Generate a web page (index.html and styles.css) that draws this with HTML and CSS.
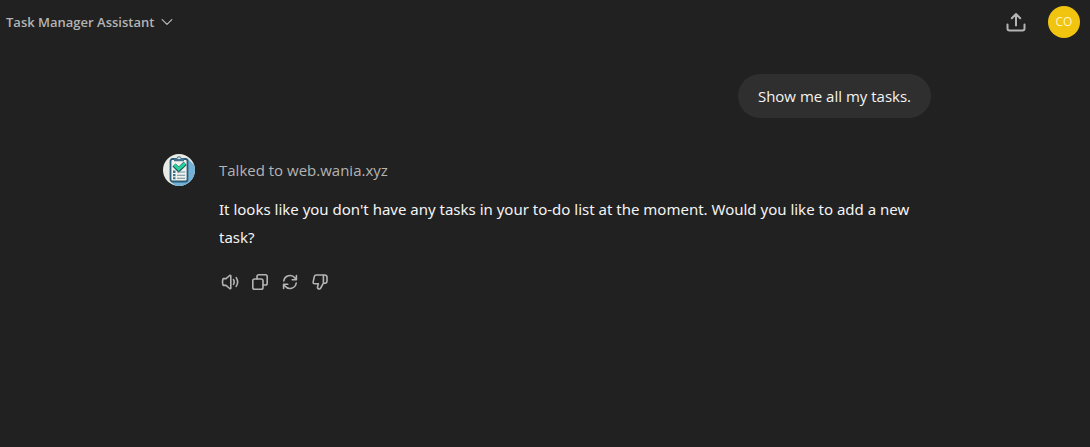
FILE: index.html
```html
<!DOCTYPE html>
<html lang="en">
<head>
<meta charset="utf-8">
<title>Task Manager Assistant</title>
<link rel="stylesheet" href="styles.css">
</head>
<body>
<header class="topbar">
  <button class="model" type="button">Task Manager Assistant
    <svg class="chevron" viewBox="0 0 12 12" aria-hidden="true"><path d="M1.2 3.6 6 8.4l4.8-4.8"/></svg>
  </button>
  <div class="account">
    <button class="icon-button" type="button" aria-label="Share">
      <svg class="share" viewBox="0 0 20 20" aria-hidden="true"><path d="M10 13.5V2M5.8 6.2 10 2l4.2 4.2M1.5 12.5v4a2 2 0 0 0 2 2h13a2 2 0 0 0 2-2v-4"/></svg>
    </button>
    <button class="avatar" type="button" aria-label="Account CO">CO</button>
  </div>
</header>
<main class="conversation">
  <div class="thread">
    <p class="prompt">Show me all my tasks.</p>
    <article class="reply">
      <svg class="logo" viewBox="0 0 32 32" role="img" aria-label="Task Manager Assistant">
        <defs><clipPath id="disc"><circle cx="16" cy="16" r="16"/></clipPath></defs>
        <g clip-path="url(#disc)">
          <path fill="#e8eae5" d="M0 0h32v32H0z"/>
          <path fill="#73b1d5" d="M25 5 34 14v20H15l-7-6z"/>
          <rect x="7.5" y="5" width="17" height="22.5" rx="2" fill="#f0f2eb" stroke="#285b78" stroke-width="1.8"/>
          <path d="M11 4.5h2.5q.3-2.2 2.5-2.2t2.5 2.2H21v2.7H11z" fill="#44718b"/>
          <path d="M14.5 4.3h3" stroke="#dce6e6"/>
          <path d="m11 11 4.7 4.6 6.5-6.2" fill="none" stroke="#24545f" stroke-width="4.4"/>
          <path d="m11.3 10.8 4.4 4.2 6.2-5.6" fill="none" stroke="#25d49c" stroke-width="2.9"/>
          <path d="M10 16.5h2.5V19H10zM10 20h2.5v2.3H10zM10 23.3h2.5v2H10z" fill="#39758c"/>
          <path d="M14 18h8.2M14 21.2h8.2M14 24.3h8.2" stroke="#688c9d" stroke-width="1.1"/>
        </g>
      </svg>
      <div class="body">
        <p class="source">Talked to web.wania.xyz</p>
        <p class="answer">It looks like you don't have any tasks in your to-do list at the moment. Would you like to add a new task?</p>
        <div class="actions">
          <button class="action" type="button" aria-label="Read aloud"><svg viewBox="0 0 18 18" aria-hidden="true"><path d="M9.8 3.1v11.8q0 1.2-1.1.6L5 12.4H2.2Q.8 9 2.2 5.6H5l3.7-3.1q1.1-.6 1.1.6M12.5 6.7q1.4 2.3 0 4.6M15.2 4.6q2.9 4.4 0 8.8"/></svg></button>
          <button class="action" type="button" aria-label="Copy"><svg viewBox="0 0 18 18" aria-hidden="true"><rect x="1.8" y="6" width="10.2" height="10.2" rx="1.8"/><path d="M6 6V3.6q0-1.8 1.8-1.8h6.6q1.8 0 1.8 1.8v6.6q0 1.8-1.8 1.8H12"/></svg></button>
          <button class="action" type="button" aria-label="Regenerate"><svg viewBox="0 0 18 18" aria-hidden="true"><path d="M2.8 8A6.3 6.3 0 0 1 14 4.9l1.2 1.6M15.4 2.5v4.2h-4.2M15.2 10A6.3 6.3 0 0 1 4 13.1l-1.2-1.6M2.6 15.5v-4.2h4.2"/></svg></button>
          <button class="action" type="button" aria-label="Bad response"><svg viewBox="0 0 18 18" aria-hidden="true"><path d="M12.4 2v8.2L9.7 15q-.7 1.3-2 .9-1.6-.5-1.1-2.3l.8-2.8H3.8q-2 0-1.6-2L3.3 3.6Q3.7 2 5.3 2h8.3q2.4 0 2.4 2.3v3.6q0 2.3-2.4 2.3h-1.2"/></svg></button>
        </div>
      </div>
    </article>
  </div>
</main>
</body>
</html>
```

FILE: styles.css
```css
* { box-sizing: border-box; }
body {
  margin: 0;
  background: #212121;
  color: #f4f4f4;
  font: 15px/28px "Segoe UI", "Open Sans", "Noto Sans", sans-serif;
}
p { margin: 0; }
button {
  border: 0;
  padding: 0;
  background: none;
  color: #b4b4b4;
  font: inherit;
  cursor: pointer;
}
svg {
  display: block;
  fill: none;
  stroke: currentColor;
  stroke-width: 1.6;
  stroke-linecap: round;
  stroke-linejoin: round;
}
.topbar {
  display: flex;
  align-items: center;
  justify-content: space-between;
  padding: 6px 10px 6px 6px;
}
.model {
  display: flex;
  align-items: center;
  gap: 7px;
  font-size: 13px;
  font-weight: 600;
}
.chevron { width: 12px; height: 12px; stroke-width: 1.3; }
.account { display: flex; align-items: center; gap: 22px; }
.share { width: 20px; height: 20px; stroke-width: 2; }
.avatar {
  width: 32px;
  height: 32px;
  border-radius: 50%;
  background: #f1c40f;
  color: #fff4c8;
  font-size: 12px;
  line-height: 32px;
}
.conversation { padding: 30px 0 0 4px; }
.thread {
  display: flex;
  flex-direction: column;
  gap: 36px;
  max-width: 768px;
  margin: 0 auto;
}
.prompt {
  align-self: flex-end;
  padding: 8px 20px;
  border-radius: 22px;
  background: #2f2f2f;
}
.reply { display: flex; gap: 24px; }
.logo { flex: none; width: 32px; height: 32px; stroke: none; stroke-linecap: butt; stroke-linejoin: miter; }
.body { flex: 1; padding-top: 2px; }
.source { color: #b4b4b4; }
.answer { margin-top: 11px; font-family: "Segoe UI", "Noto Sans", sans-serif; }
.actions { display: flex; gap: 12px; margin-top: 22px; padding-left: 2px; }
.action svg { width: 18px; height: 18px; }
```
